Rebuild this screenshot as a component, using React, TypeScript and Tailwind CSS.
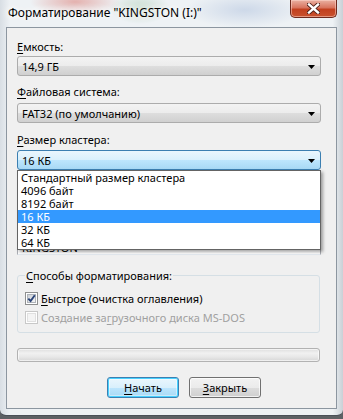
import React from 'react';
import clsx from 'clsx';

const comboNormal =
  'border-[#acacac] bg-[linear-gradient(#f3f3f3_0%,#ececec_50%,#dedede_50%,#d0d0d0_100%)]';
const comboFocus =
  'border-[#3c7fb1] bg-[linear-gradient(#eaf6fd_0%,#d9f0fc_50%,#bee6fd_50%,#a7d9f5_100%)]';

function Arrow() {
  return (
    <svg width="7" height="4" viewBox="0 0 7 4" className="mt-[1px]">
      <path d="M0 0h7L3.5 4z" fill="#000" />
    </svg>
  );
}

function Combo({ value, focused }: { value: string; focused?: boolean }) {
  return (
    <div
      className={clsx(
        'flex h-[20px] w-[304px] items-center rounded-[3px] border pl-[4px] pr-[5px] leading-[15px]',
        focused ? comboFocus : comboNormal
      )}
    >
      <span className="flex-1">{value}</span>
      <Arrow />
    </div>
  );
}

function Label({ k, rest, className }: { k: string; rest: string; className?: string }) {
  return (
    <div className={clsx('h-[15px] leading-[15px]', className)}>
      <span className="underline underline-offset-[2px]">{k}</span>
      {rest}
    </div>
  );
}

function Checkbox({ checked, disabled }: { checked?: boolean; disabled?: boolean }) {
  return (
    <div
      className={clsx(
        'flex h-[13px] w-[13px] shrink-0 items-center justify-center border bg-white p-[1px]',
        disabled ? 'border-[#c8c8c8]' : 'border-[#8e8f8f]'
      )}
    >
      <div
        className={clsx(
          'relative h-full w-full border',
          disabled
            ? 'border-[#e0e0e0] bg-[#f4f4f4]'
            : 'border-[#aeb3b9] bg-[linear-gradient(135deg,#cbcfd5,#f6f6f6)]'
        )}
      >
        {checked && (
          <svg width="9" height="9" viewBox="0 0 9 9" className="absolute -left-[1px] -top-[1px]">
            <path d="M1.3 4.6 3.6 7 7.8 1.2" fill="none" stroke="#2a4478" strokeWidth="1.9" />
          </svg>
        )}
      </div>
    </div>
  );
}

const items = ['Стандартный размер кластера', '4096 байт', '8192 байт', '16 КБ', '32 КБ', '64 КБ'];

export default function App() {
  return (
    <div className="relative h-[419px] w-[343px] overflow-hidden bg-[#5d6165] font-['Noto_Sans',sans-serif] text-[11px] text-black">
      <div className="flex h-[416px] flex-col rounded-b-[6px] border-b border-[#4a5058] bg-[radial-gradient(ellipse_45px_14px_at_75px_2px,rgba(215,95,85,0.45),transparent),radial-gradient(ellipse_30px_16px_at_140px_8px,rgba(110,170,120,0.3),transparent),radial-gradient(ellipse_60px_18px_at_245px_10px,rgba(120,150,200,0.28),transparent),linear-gradient(90deg,#d8dee4,#eef2f5_3%,#eef2f5_97%,#c9d0d6)] px-[6px] pb-[6px]">
        {/* title bar */}
        <div className="flex h-[27px] items-start">
          <div className="pl-[2px] pt-[5px] text-[12px] leading-[15px] [text-shadow:0_0_6px_#fff,0_0_10px_#fff,0_0_14px_#fff]">
            Форматирование "KINGSTON (I:)"
          </div>
          <div className="ml-auto flex h-[18px] w-[47px] items-center justify-center rounded-b-[5px] border border-t-0 border-[#6e2a1e] bg-[linear-gradient(#eab1a2_0%,#d8745e_45%,#c2401f_55%,#c9532f_100%)] shadow-[inset_0_0_0_1px_rgba(255,220,210,0.5)]">
            <svg width="13" height="11" viewBox="0 0 13 11">
              <path d="M2 1.5l9 8M11 1.5l-9 8" stroke="#4b1f17" strokeWidth="4.2" strokeLinecap="square" />
              <path d="M2 1.5l9 8M11 1.5l-9 8" stroke="#fff" strokeWidth="2.4" strokeLinecap="square" />
            </svg>
          </div>
        </div>

        {/* client area */}
        <div className="flex flex-1 flex-col border border-[#8c96a0] bg-[#f0f0f0] pl-[10px]">
          <Label k="Е" rest="мкость:" className="mt-[11px]" />
          <div className="mt-[2px]">
            <Combo value="14,9 ГБ" />
          </div>
          <Label k="Ф" rest="айловая система:" className="mt-[8px]" />
          <div className="mt-[4px]">
            <Combo value="FAT32 (по умолчанию)" />
          </div>
          <Label k="Р" rest="азмер кластера:" className="mt-[9px]" />
          <div className="relative z-10 mt-[3px]">
            <Combo value="16 КБ" focused />
            <div className="absolute left-0 top-[20px] w-[304px] border border-[#646464] bg-white shadow-[2px_2px_3px_rgba(0,0,0,0.35)]">
              {items.map((it, i) => (
                <div
                  key={it}
                  className={clsx(
                    'h-[13px] pl-[3px] leading-[13px]',
                    i === 3 && 'bg-[#3399ff] text-white'
                  )}
                >
                  {it}
                </div>
              ))}
            </div>
          </div>

          {/* volume label field, mostly covered by the open list */}
          <div className="mt-[64px] h-[21px] w-[304px] border border-[#abadb3] border-b-[#e3e9ef] bg-white pl-[4px] pt-[5px] leading-[15px]">
            KINGSTON
          </div>

          <fieldset className="mt-[13px] w-[303px] rounded-[3px] border border-[#d5dfe5] pb-[5px] pl-[7px] pt-[6px]">
            <legend className="px-[1px] leading-[15px]">
              <span className="underline underline-offset-[2px]">С</span>пособы форматирования:
            </legend>
            <div className="flex h-[19px] items-center gap-[3px]">
              <Checkbox checked />
              <span className="leading-[15px]">
                <span className="underline underline-offset-[2px]">Б</span>ыстрое (очистка оглавления)
              </span>
            </div>
            <div className="flex h-[19px] items-center gap-[3px] text-[#a0a0a0]">
              <Checkbox disabled />
              <span className="leading-[15px]">
                Создание за<span className="underline underline-offset-[2px]">г</span>рузочного диска MS-DOS
              </span>
            </div>
          </fieldset>

          <div className="mt-[15px] h-[14px] w-[303px] rounded-[3px] border border-[#b2b2b2] bg-[linear-gradient(#dedede,#f1f1f1_35%,#e8e8e8_65%,#d6d6d6)] shadow-[inset_0_0_0_1px_rgba(255,255,255,0.6)]" />

          <div className="ml-[90px] mt-[15px] flex gap-[10px]">
            <button className="flex h-[21px] w-[72px] items-center justify-center rounded-[3px] border border-[#3c7fb1] bg-[linear-gradient(#eaf6fd_0%,#d9f0fc_50%,#bee6fd_50%,#a7d9f5_100%)] leading-[15px] shadow-[inset_0_0_0_1px_#48d1ff,inset_0_0_0_2px_rgba(255,255,255,0.4)]">
              <span>
                <span className="underline underline-offset-[2px]">Н</span>ачать
              </span>
            </button>
            <button className="flex h-[21px] w-[72px] items-center justify-center rounded-[3px] border border-[#707070] bg-[linear-gradient(#f2f2f2_0%,#ebebeb_50%,#dddddd_50%,#cfcfcf_100%)] leading-[15px] shadow-[inset_0_0_0_1px_rgba(255,255,255,0.7)]">
              <span>
                <span className="underline underline-offset-[2px]">З</span>акрыть
              </span>
            </button>
          </div>
        </div>
      </div>
    </div>
  );
}
